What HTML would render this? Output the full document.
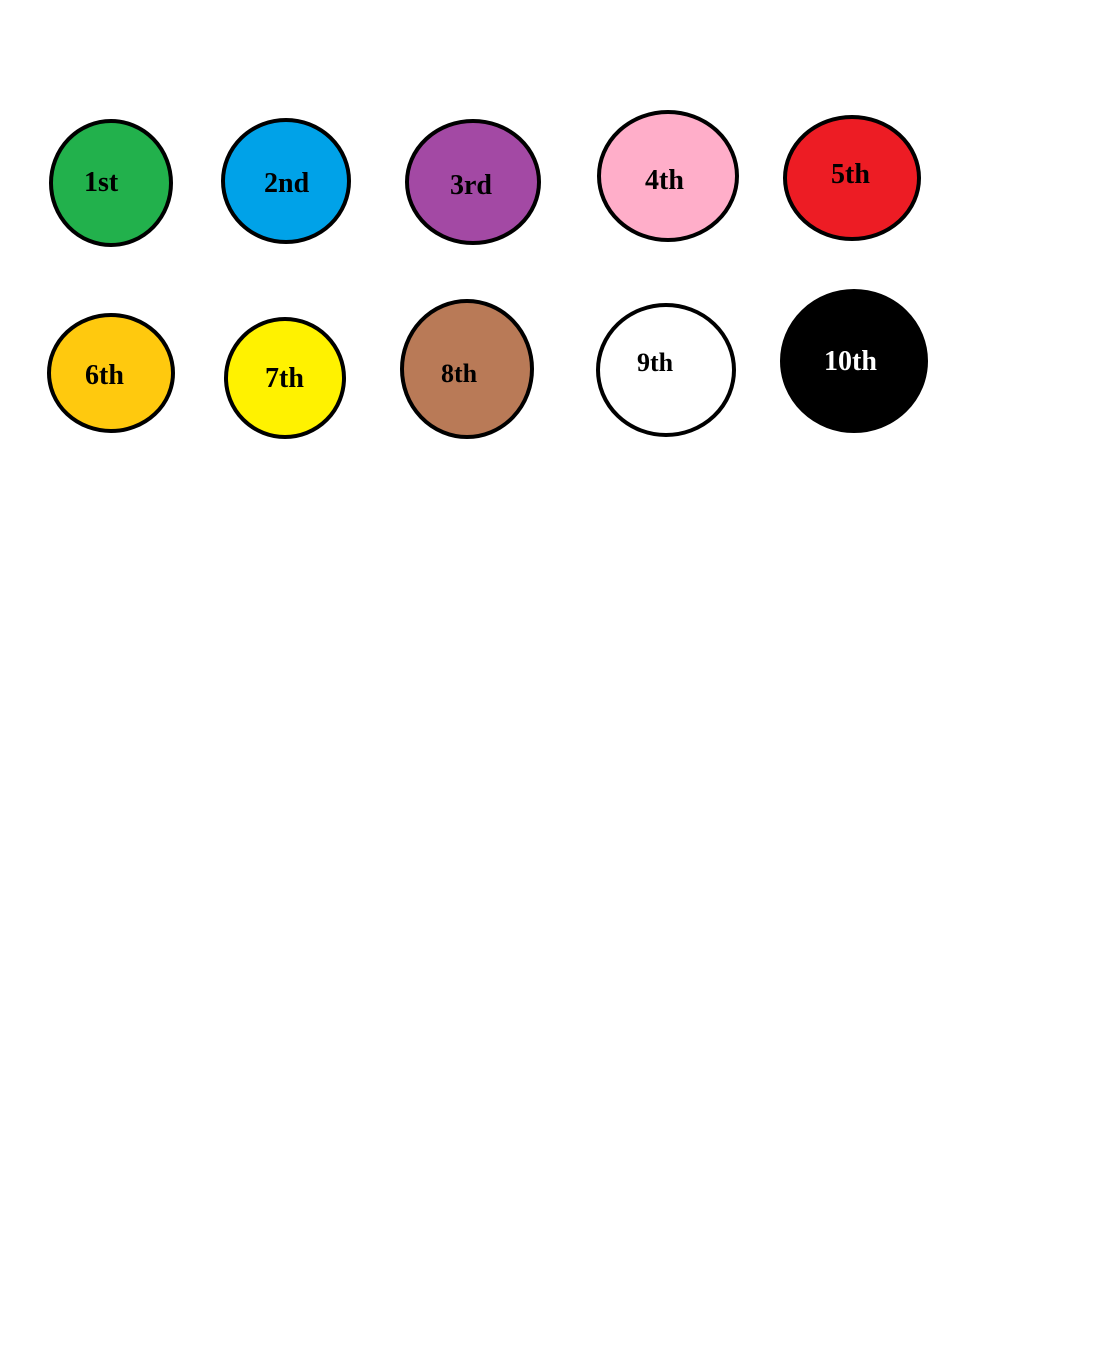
<!DOCTYPE html>
<html><head><meta charset="utf-8"><style>
html,body{margin:0;padding:0;background:#fff;}
svg{display:block;}
text{font-family:"Liberation Serif",serif;font-weight:bold;font-size:28px;}
</style></head><body>
<svg width="1111" height="1354" viewBox="0 0 1111 1354">
<g stroke="#000" stroke-width="4">
<ellipse cx="111" cy="183" rx="60" ry="62" fill="#22b14c"/>
<ellipse cx="286" cy="181" rx="63" ry="61" fill="#00a2e8"/>
<ellipse cx="473" cy="182" rx="66" ry="61" fill="#a349a4"/>
<ellipse cx="668" cy="176" rx="69" ry="64" fill="#ffaec9"/>
<ellipse cx="852" cy="178" rx="67" ry="61" fill="#ed1c24"/>
<ellipse cx="111" cy="373" rx="62" ry="58" fill="#ffc90e"/>
<ellipse cx="285" cy="378" rx="59" ry="59" fill="#fff200"/>
<ellipse cx="467" cy="369" rx="65" ry="68" fill="#b97a57"/>
<ellipse cx="666" cy="370" rx="68" ry="65" fill="#fff"/>
<ellipse cx="854" cy="361" rx="72" ry="70" fill="#000"/>
</g>
<text x="84" y="191">1st</text>
<text x="264" y="192">2nd</text>
<text x="450" y="194">3rd</text>
<text x="645" y="189">4th</text>
<text x="831" y="183">5th</text>
<text x="85" y="384">6th</text>
<text x="265" y="387">7th</text>
<text x="441" y="382" style="font-size:26px">8th</text>
<text x="637" y="371" style="font-size:26px">9th</text>
<text x="824" y="370" fill="#fff">10th</text>
</svg>
</body></html>
